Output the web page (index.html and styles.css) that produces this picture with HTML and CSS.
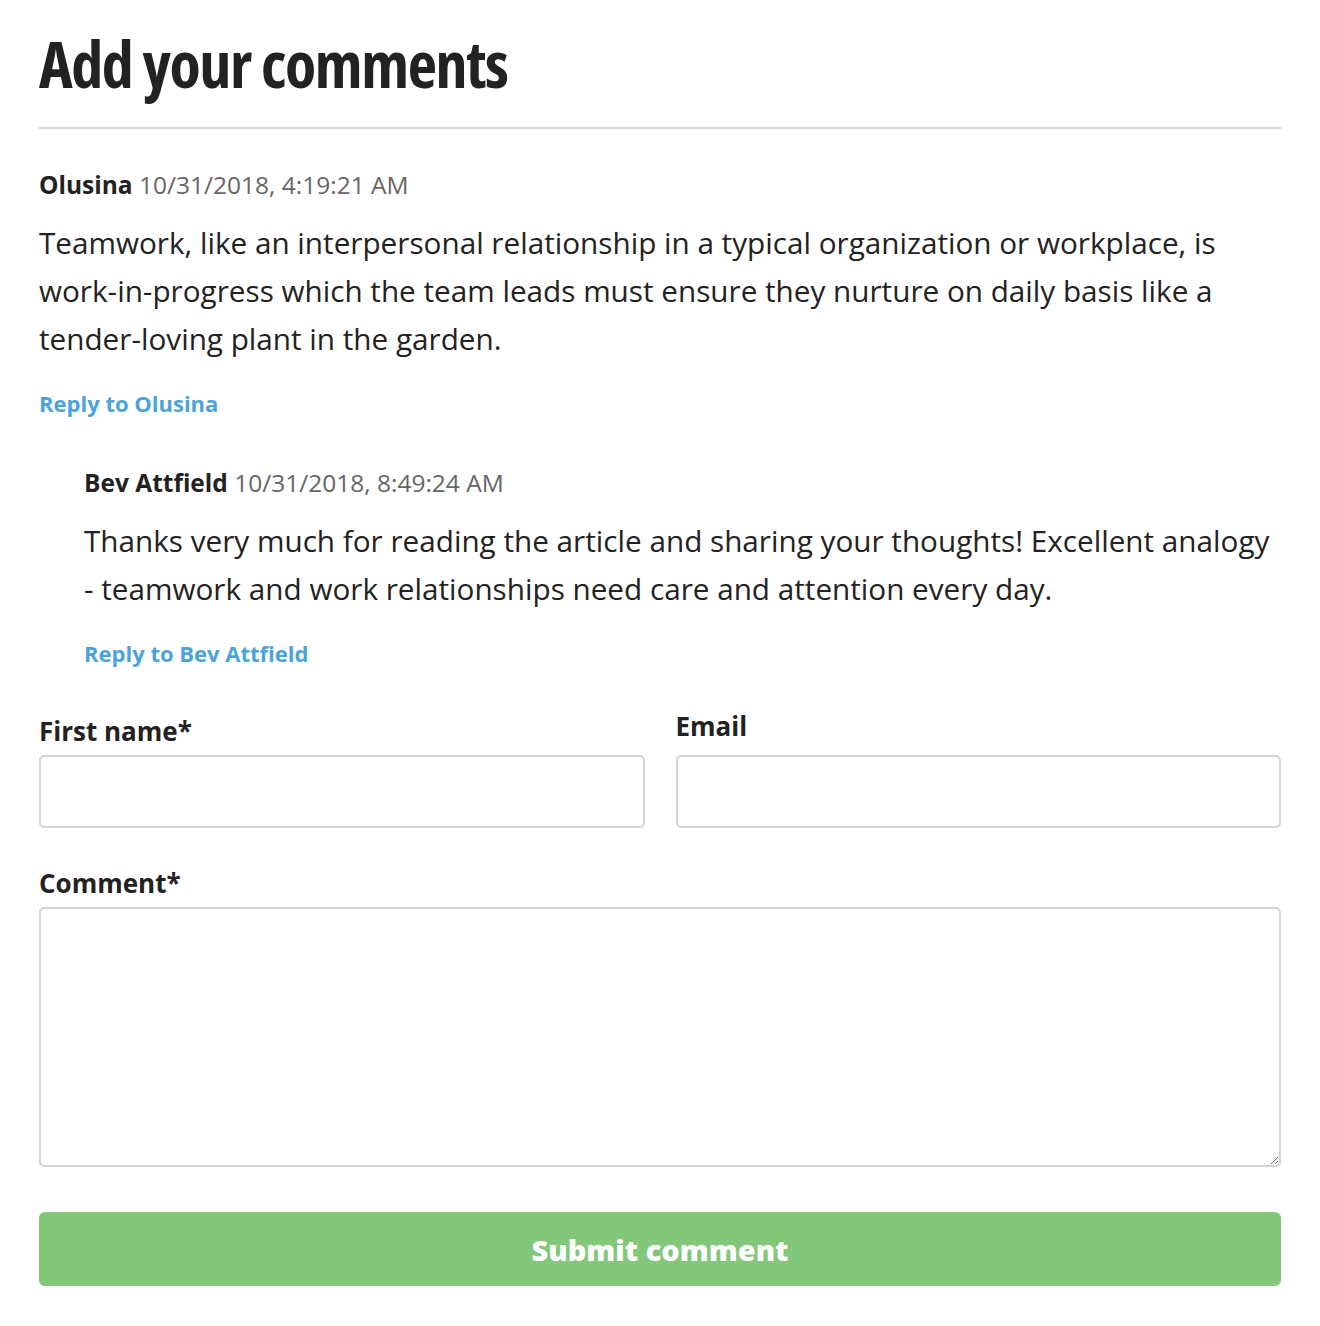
FILE: index.html
```html
<!DOCTYPE html>
<html lang="en">
<head>
<meta charset="utf-8">
<title>Add your comments</title>
<link rel="stylesheet" href="styles.css">
</head>
<body>
<main class="page">
  <h1 class="title">Add your comments</h1>
  <hr class="rule">
  <section class="comments">
    <article class="comment">
      <div class="meta"><span class="author">Olusina</span> <span class="date">10/31/2018, 4:19:21 AM</span></div>
      <p class="body">Teamwork, like an interpersonal relationship in a typical organization or workplace, is work-in-progress which the team leads must ensure they nurture on daily basis like a tender-loving plant in the garden.</p>
      <a class="reply" href="#">Reply to Olusina</a>
      <article class="comment nested">
        <div class="meta"><span class="author">Bev Attfield</span> <span class="date">10/31/2018, 8:49:24 AM</span></div>
        <p class="body">Thanks very much for reading the article and sharing your thoughts! Excellent analogy - teamwork and work relationships need care and attention every day.</p>
        <a class="reply" href="#">Reply to Bev Attfield</a>
      </article>
    </article>
  </section>
  <form class="form">
    <div class="row">
      <div class="field">
        <label class="label label-first">First name*</label>
        <input class="input" type="text">
      </div>
      <div class="field">
        <label class="label label-email">Email</label>
        <input class="input" type="email">
      </div>
    </div>
    <div class="field">
      <label class="label">Comment*</label>
      <textarea class="textarea"></textarea>
    </div>
    <button class="submit" type="button">Submit comment</button>
  </form>
</main>
</body>
</html>
```
FILE: styles.css
```css
html, body {
  margin: 0;
  padding: 0;
  background: #fff;
}
body {
  font-family: "Open Sans", "Noto Sans", sans-serif;
  color: #222;
}
.page {
  padding: 0 39px 0 39px;
}
.title {
  margin: 0;
  padding-top: 24px;
  font-size: 64px;
  line-height: 80px;
  font-weight: 700;
  font-stretch: 75%;
  letter-spacing: -1.4px;
  color: #222;
}
.rule {
  margin: 23px 0 0 0;
  border: 0;
  height: 2px;
  background: #d6d6d6;
}
.comments {
  padding-top: 40px;
}
.meta {
  font-size: 24.5px;
  line-height: 32px;
}
.author {
  font-weight: 700;
  color: #222;
}
.date {
  color: #666;
}
.body {
  margin: 18px 0 0 0;
  font-size: 29.7px;
  line-height: 48px;
  color: #222;
}
.reply {
  display: block;
  margin-top: 24px;
  font-size: 22px;
  line-height: 32px;
  font-weight: 700;
  color: #4ba3db;
  text-decoration: none;
}
.nested {
  margin-left: 45px;
  margin-top: 48px;
}
.form {
  margin-top: 40px;
}
.row {
  display: grid;
  grid-template-columns: 1fr 1fr;
  gap: 31px;
}
.field {
  display: flex;
  flex-direction: column;
}
.label {
  font-size: 26px;
  line-height: 32px;
  font-weight: 700;
  color: #222;
  margin-bottom: 8px;
}
.label-first {
  margin-top: 6px;
  margin-bottom: 8px;
}
.label-email {
  margin-top: 1px;
  margin-bottom: 13px;
}
.input {
  box-sizing: border-box;
  height: 73px;
  border: 2px solid #d4d4d4;
  border-radius: 5px;
  font: inherit;
  padding: 0 16px;
}
.form > .field {
  margin-top: 39px;
}
.textarea {
  box-sizing: border-box;
  height: 260px;
  border: 2px solid #d4d4d4;
  border-radius: 5px;
  font: inherit;
  padding: 12px 16px;
  resize: vertical;
}
.submit {
  display: block;
  width: 100%;
  margin-top: 45px;
  height: 74px;
  border: 0;
  border-radius: 6px;
  background: #82c77a;
  color: #fff;
  font-family: "Open Sans", "Noto Sans", sans-serif;
  font-size: 29px;
  font-weight: 800;
  cursor: pointer;
}
```
